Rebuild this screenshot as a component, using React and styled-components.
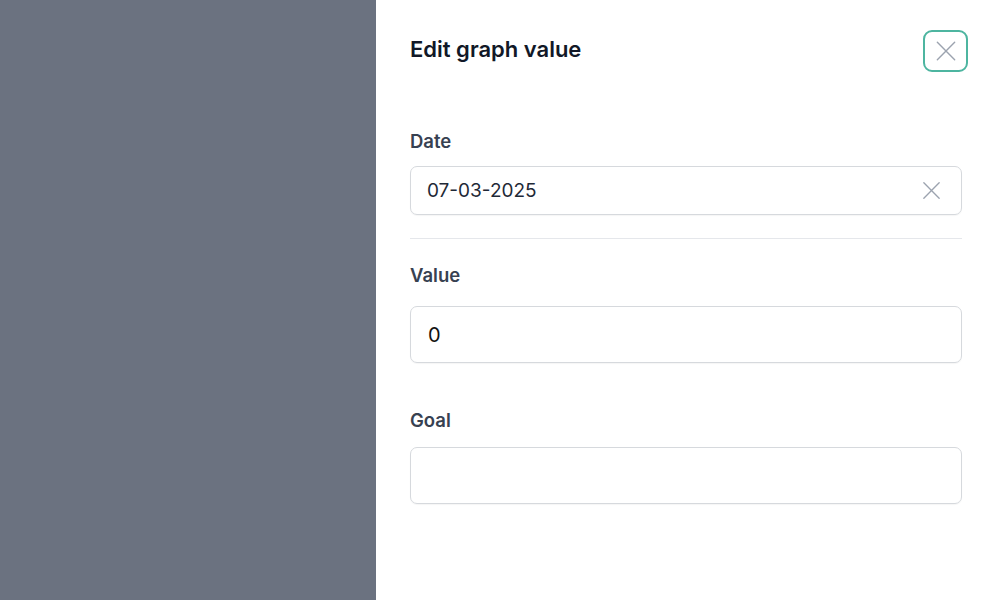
import React from "react";
import styled, { createGlobalStyle } from "styled-components";

const Global = createGlobalStyle`
  html, body, #root { margin: 0; padding: 0; height: 100%; }
  body { font-family: Inter, "Noto Sans", sans-serif; -webkit-font-smoothing: antialiased; }
  * { box-sizing: border-box; }
`;

const Screen = styled.div`
  display: flex;
  width: 1000px;
  height: 600px;
  overflow: hidden;
`;

const Backdrop = styled.div`
  width: 376px;
  flex-shrink: 0;
  background: #6b7280;
`;

const Panel = styled.div`
  flex: 1;
  background: #ffffff;
  padding: 30px 32px 0 34px;
  display: flex;
  flex-direction: column;
`;

const Header = styled.div`
  display: flex;
  align-items: flex-start;
  justify-content: space-between;
  height: 72px;
`;

const Title = styled.h2`
  margin: 6px 0 0;
  font-size: 22px;
  line-height: 26px;
  font-weight: 600;
  color: #111827;
`;

const CloseButton = styled.button`
  width: 45px;
  height: 42px;
  border: 2px solid #4db5a0;
  border-radius: 9px;
  background: #fff;
  display: flex;
  align-items: center;
  justify-content: center;
  padding: 0;
  color: #9ca3af;
  cursor: pointer;
`;

const Form = styled.div`
  display: flex;
  flex-direction: column;
  padding-right: 6px;
  margin-top: 28px;
`;

const Field = styled.div`
  display: flex;
  flex-direction: column;
  margin-bottom: ${(p) => p.$mb || 0}px;
`;

const Label = styled.label`
  font-size: 18.5px;
  line-height: 22px;
  font-weight: 600;
  color: #374151;
  margin-bottom: ${(p) => p.$gap}px;
`;

const InputBox = styled.div`
  height: ${(p) => p.$h}px;
  border: 1px solid #d6d9dd;
  border-radius: 7px;
  display: flex;
  align-items: center;
  padding: 0 ${(p) => p.$pr || 16}px 0 ${(p) => p.$pl}px;
  box-shadow: 0 1px 1px rgba(0, 0, 0, 0.04);
`;

const InputText = styled.span`
  flex: 1;
  font-size: ${(p) => p.$fs}px;
  color: ${(p) => p.$color};
`;

const Divider = styled.hr`
  border: none;
  border-top: 1px solid #e5e7eb;
  margin: 23px 0 25px;
  width: 100%;
`;

const XIcon = ({ size, stroke = 1.6 }) => (
  <svg width={size} height={size} viewBox="0 0 24 24" fill="none" stroke="currentColor" strokeWidth={stroke} strokeLinecap="round">
    <path d="M4 4 L20 20 M20 4 L4 20" />
  </svg>
);

const ClearIcon = styled.span`
  display: flex;
  color: #9ca3af;
`;

export default function App() {
  return (
    <>
      <Global />
      <Screen>
        <Backdrop />
        <Panel>
          <Header>
            <Title>Edit graph value</Title>
            <CloseButton aria-label="Close">
              <XIcon size={26} stroke={1.3} />
            </CloseButton>
          </Header>
          <Form>
            <Field>
              <Label $gap={14}>Date</Label>
              <InputBox $h={49} $pl={16} $pr={18}>
                <InputText $fs={19} $color="#1f2937">07-03-2025</InputText>
                <ClearIcon>
                  <XIcon size={23} stroke={1.4} />
                </ClearIcon>
              </InputBox>
            </Field>
            <Divider />
            <Field $mb={46}>
              <Label $gap={20}>Value</Label>
              <InputBox $h={57} $pl={17}>
                <InputText $fs={20} $color="#111111">0</InputText>
              </InputBox>
            </Field>
            <Field>
              <Label $gap={16}>Goal</Label>
              <InputBox $h={57} $pl={17}>
                <InputText $fs={20} $color="#111111"></InputText>
              </InputBox>
            </Field>
          </Form>
        </Panel>
      </Screen>
    </>
  );
}
